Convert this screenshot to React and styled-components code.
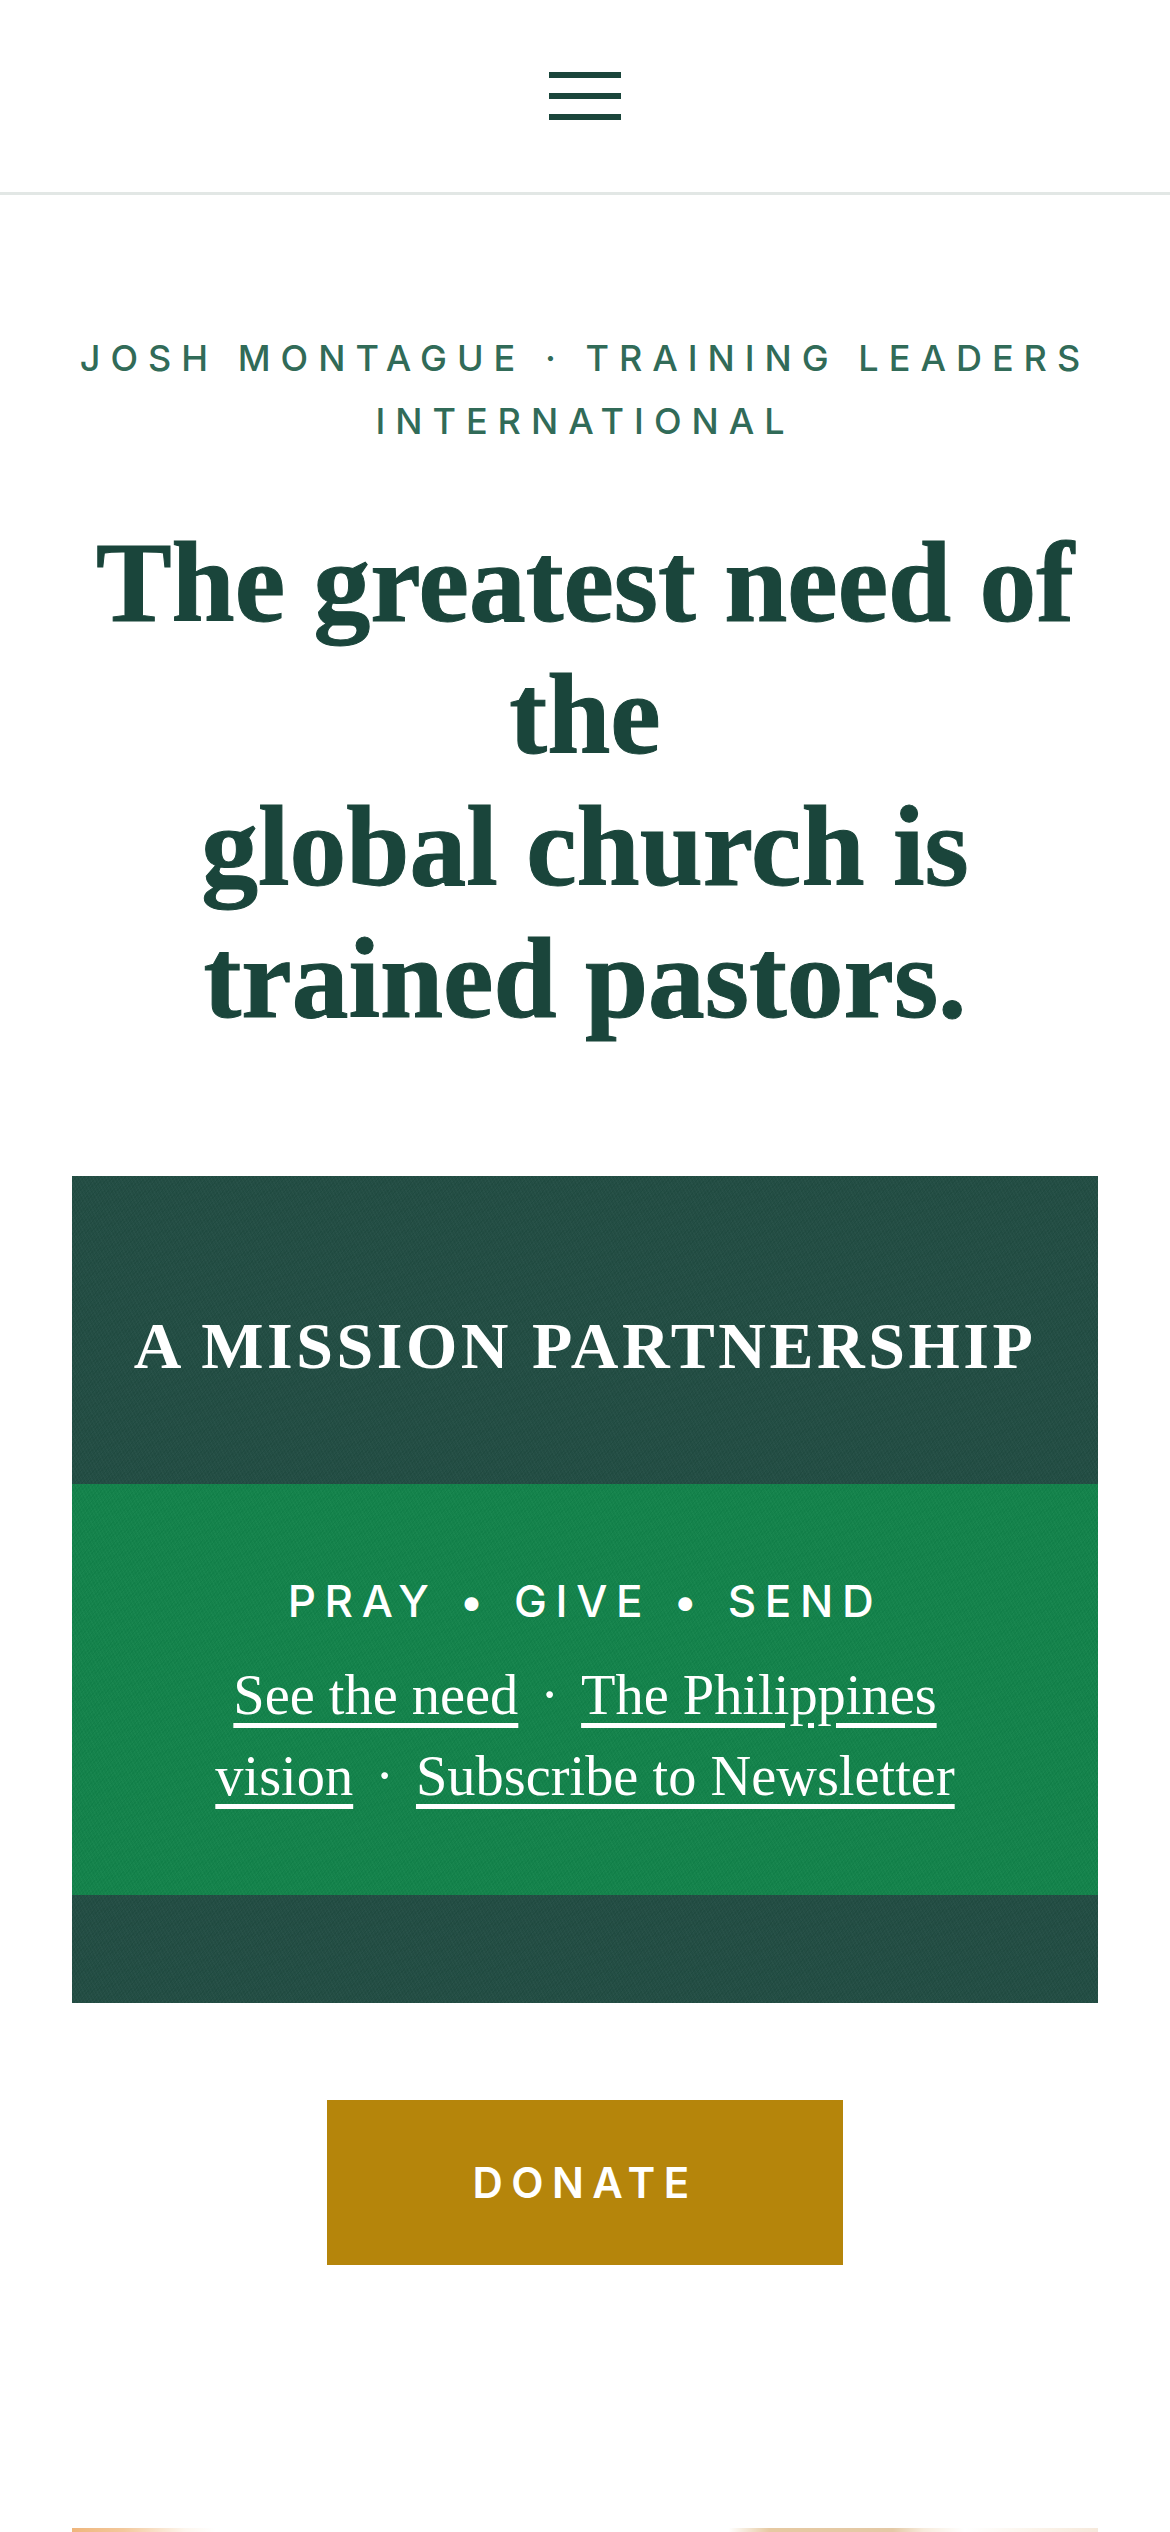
import React from 'react'
import styled, { createGlobalStyle } from 'styled-components'

const GlobalStyle = createGlobalStyle`
  html, body {
    margin: 0;
    padding: 0;
    background: #fff;
  }
  * {
    box-sizing: border-box;
  }
`

const grain = `
  repeating-linear-gradient(63deg, rgba(255,255,255,0.018) 0 1px, rgba(0,0,0,0.018) 1px 3px),
  repeating-linear-gradient(-47deg, rgba(255,255,255,0.014) 0 2px, rgba(0,0,0,0.014) 2px 3px)
`

const Page = styled.div`
  width: 1170px;
  height: 2532px;
  overflow: hidden;
  background: #fff;
`

const Header = styled.header`
  height: 195px;
  border-bottom: 3px solid #e2e7e5;
  display: flex;
  justify-content: center;
  padding-top: 72px;
`

const MenuButton = styled.button`
  width: 72px;
  height: 48px;
  padding: 0;
  border: none;
  background: none;
  display: flex;
  flex-direction: column;
  justify-content: space-between;
`

const MenuBar = styled.span`
  display: block;
  height: 6px;
  background: #1a453b;
`

const Hero = styled.section`
  padding: 132px 60px 0;
  text-align: center;
`

const Eyebrow = styled.p`
  margin: 0;
  font-family: Inter, 'Noto Sans', sans-serif;
  font-size: 36px;
  font-weight: 500;
  line-height: 63px;
  letter-spacing: 10px;
  color: #316b58;
`

const Title = styled.h1`
  margin: 64px 6px 0;
  font-family: 'Liberation Serif', serif;
  font-size: 113.5px;
  font-weight: 700;
  line-height: 132px;
  color: #1a453b;
  -webkit-text-stroke: 1px #1a453b;
`

const Panel = styled.section`
  margin: 131px 72px 0;
  background-color: #214c42;
  background-image: ${grain};
  padding-bottom: 108px;
`

const PanelHeading = styled.h2`
  margin: 0;
  height: 308px;
  padding-top: 32px;
  display: flex;
  align-items: center;
  justify-content: center;
  font-family: 'Liberation Serif', serif;
  font-size: 66px;
  font-weight: 700;
  letter-spacing: 3.5px;
  color: #fff;
`

const Band = styled.div`
  height: 411px;
  padding: 86px 100px 0;
  background-color: #11834a;
  background-image: ${grain};
  text-align: center;
`

const BandTitle = styled.p`
  margin: 0 0 23px;
  font-family: Inter, 'Noto Sans', sans-serif;
  font-size: 44px;
  font-weight: 500;
  line-height: 62px;
  letter-spacing: 8.6px;
  word-spacing: 2px;
  color: #fff;
`

const Links = styled.p`
  margin: 0 -20px;
  font-family: 'Liberation Serif', serif;
  font-size: 56.4px;
  line-height: 81px;
  color: #fff;
`

const BandLink = styled.a`
  color: #fff;
  text-decoration: underline;
  text-decoration-thickness: 5px;
  text-underline-offset: 9px;
`

const Separator = styled.span`
  margin: 0 22px;
`

const Actions = styled.div`
  display: flex;
  justify-content: center;
  padding-top: 97px;
`

const Donate = styled.a`
  width: 516px;
  height: 165px;
  display: flex;
  align-items: center;
  justify-content: center;
  background: #b5850b;
  font-family: Inter, 'Noto Sans', sans-serif;
  font-size: 42px;
  font-weight: 600;
  letter-spacing: 0.2em;
  color: #fff;
  text-decoration: none;
`

const PhotoEdge = styled.div`
  height: 4px;
  margin: 263px 72px 0;
  background: linear-gradient(
    90deg,
    #efb67c 0,
    #f3c89c 5%,
    #fdf6ee 11%,
    #fff 14%,
    #fff 64%,
    #e6c9a2 68%,
    #e4c9a6 80%,
    #f7ebdc 83%,
    #fff 87%,
    #fbf3ea 94%,
    #f6e9dc 100%
  );
`

export default function App() {
  return (
    <Page>
      <GlobalStyle />
      <Header>
        <MenuButton aria-label="Menu">
          <MenuBar />
          <MenuBar />
          <MenuBar />
        </MenuButton>
      </Header>
      <Hero>
        <Eyebrow>JOSH MONTAGUE · TRAINING LEADERS INTERNATIONAL</Eyebrow>
        <Title>
          The greatest need of the
          <br />
          global church is trained pastors.
        </Title>
      </Hero>
      <Panel>
        <PanelHeading>A MISSION PARTNERSHIP</PanelHeading>
        <Band>
          <BandTitle>PRAY • GIVE • SEND</BandTitle>
          <Links>
            <BandLink href="#">See the need</BandLink>
            <Separator>·</Separator>
            <BandLink href="#">The Philippines vision</BandLink>
            <Separator>·</Separator>
            <BandLink href="#">Subscribe to Newsletter</BandLink>
          </Links>
        </Band>
      </Panel>
      <Actions>
        <Donate href="#">DONATE</Donate>
      </Actions>
      <PhotoEdge />
    </Page>
  )
}
